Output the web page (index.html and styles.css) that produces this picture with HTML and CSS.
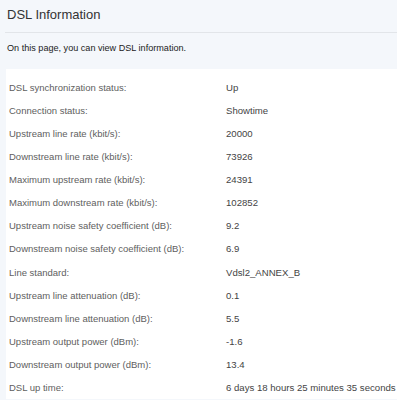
FILE: index.html
```html
<!DOCTYPE html>
<html lang="en">
<head>
<meta charset="utf-8">
<title>DSL Information</title>
<link rel="stylesheet" href="styles.css">
</head>
<body>
<div class="page">
  <div class="header"><h1 class="title">DSL Information</h1></div>
  <p class="intro">On this page, you can view DSL information.</p>
  <div class="card">
    <div class="row"><span class="label">DSL synchronization status:</span><span class="value">Up</span></div>
    <div class="row"><span class="label">Connection status:</span><span class="value">Showtime</span></div>
    <div class="row"><span class="label">Upstream line rate (kbit/s):</span><span class="value">20000</span></div>
    <div class="row"><span class="label">Downstream line rate (kbit/s):</span><span class="value">73926</span></div>
    <div class="row"><span class="label">Maximum upstream rate (kbit/s):</span><span class="value">24391</span></div>
    <div class="row"><span class="label">Maximum downstream rate (kbit/s):</span><span class="value">102852</span></div>
    <div class="row"><span class="label">Upstream noise safety coefficient (dB):</span><span class="value">9.2</span></div>
    <div class="row"><span class="label">Downstream noise safety coefficient (dB):</span><span class="value">6.9</span></div>
    <div class="row"><span class="label">Line standard:</span><span class="value">Vdsl2_ANNEX_B</span></div>
    <div class="row"><span class="label">Upstream line attenuation (dB):</span><span class="value">0.1</span></div>
    <div class="row"><span class="label">Downstream line attenuation (dB):</span><span class="value">5.5</span></div>
    <div class="row"><span class="label">Upstream output power (dBm):</span><span class="value">-1.6</span></div>
    <div class="row"><span class="label">Downstream output power (dBm):</span><span class="value">13.4</span></div>
    <div class="row"><span class="label">DSL up time:</span><span class="value">6 days 18 hours 25 minutes 35 seconds</span></div>
  </div>
</div>
</body>
</html>
```
FILE: styles.css
```css
html, body {
  margin: 0;
  padding: 0;
}
body {
  background: #f4f7fb;
  font-family: "Liberation Sans", Arial, sans-serif;
  color: #333;
}
.page {
  padding: 0;
}
.header {
  margin-left: 5px;
  padding: 7px 0 10px 2px;
  border-bottom: 1px solid #e2e5e9;
}
.title {
  margin: 0;
  font-size: 13px;
  line-height: 15px;
  font-weight: normal;
  color: #333;
}
.intro {
  margin: 9px 0 0 0;
  padding-left: 7px;
  font-size: 9.1px;
  line-height: 12px;
  color: #222;
}
.card {
  margin: 15px 0 0 6px;
  padding: 6.5px 0 0 3px;
  background: #fff;
}
.row {
  display: grid;
  grid-template-columns: 217px 1fr;
  height: 23.15px;
  line-height: 23.15px;
  white-space: nowrap;
}
.label {
  font-size: 9.5px;
  color: #606060;
}
.value {
  font-size: 9.6px;
  color: #444;
}
```
